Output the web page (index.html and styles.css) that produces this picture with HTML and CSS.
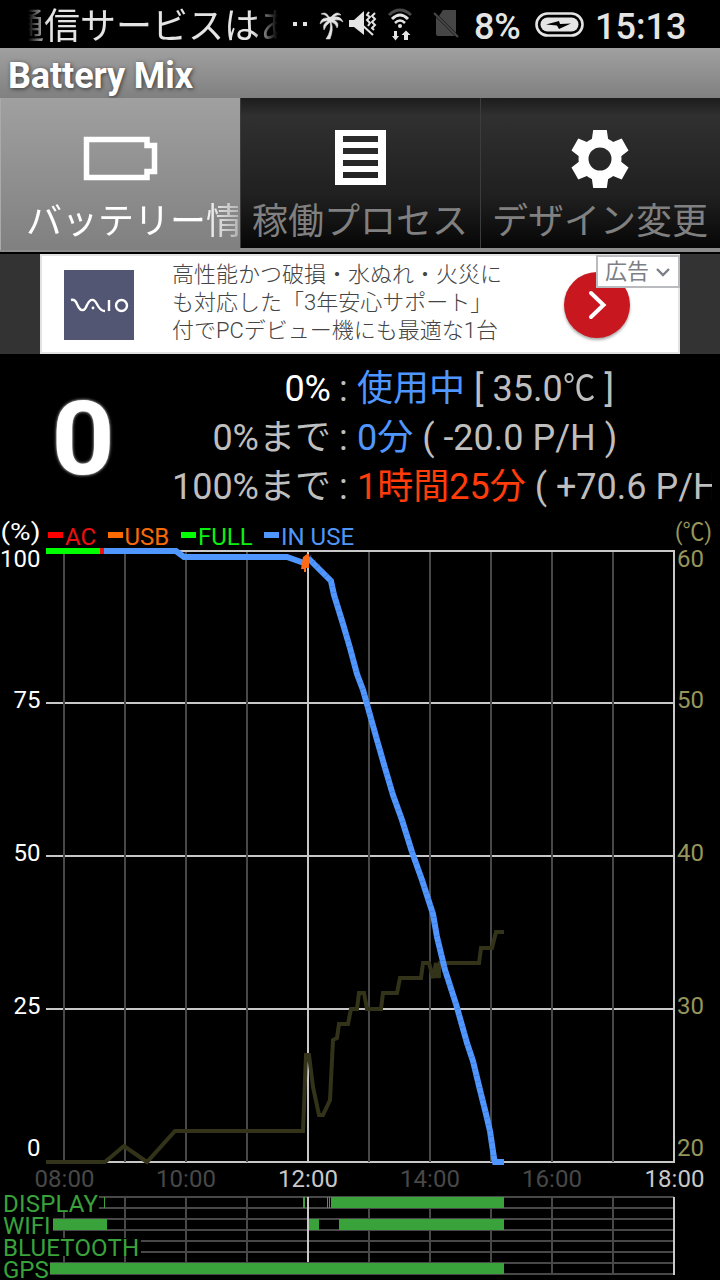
FILE: index.html
```html
<!DOCTYPE html>
<html lang="ja">
<head>
  <meta charset="UTF-8">
  <meta name="viewport" content="width=device-width, initial-scale=1.0">
  <title>Battery Mix</title>
  <link rel="stylesheet" href="styles.css">
</head>
<body>
  <!-- Status bar -->
  <div class="status-bar">
    <div class="ticker"><span>通信サービスはあ</span></div>
    <svg class="status-icons" width="182" height="48" viewBox="288 0 182 48">
      <g fill="#e4e4e4">
        <rect x="293" y="22" width="4" height="4"/>
        <rect x="303" y="22" width="4" height="4"/>
        <!-- palm tree -->
        <path d="M329 17 Q326 11 321 14 Q326 14 328 18 Q321 17 320 24 Q324 20 328 21 Q322 24 324 30 Q326 25 330 22 Q332 30 326 39 L330 39 Q334 29 331 22 Q336 23 337 28 Q340 23 334 20 Q340 19 343 22 Q341 16 334 17 Q337 14 341 15 Q337 10 331 17 Z" stroke="#e4e4e4" stroke-width="0.5"/>
        <!-- muted speaker -->
        <path d="M349 20 H354 L364 11 V35 L354 27 H349 Z"/>
      </g>
      <g fill="none" stroke="#e4e4e4" stroke-width="2">
        <path d="M361 24 L373 35"/>
        <path d="M369 12 L367 15 L370 17 L367 20 L370 23 L368 26"/>
        <path d="M375 13 L372 16 L375 19 L372 22 L375 25 L372 28 L374 30"/>
        <!-- wifi -->
        <path d="M389 15 Q400 5 411 15" stroke="#4a4a4a" stroke-width="3"/>
        <path d="M392 19 Q400 11 408 19" stroke-width="3"/>
        <path d="M395 23 Q400 18 405 23" stroke-width="2.5"/>
      </g>
      <circle cx="400" cy="26" r="2" fill="#e4e4e4"/>
      <path d="M394 31 h3 v5 h2 l-3.500 4.500 l-3.500 -4.500 h2 Z M404 40 h4 v-5 h2.500 l-4.500 -4.500 l-4.500 4.500 h2.500 Z" fill="#e4e4e4"/>
      <!-- no sim -->
      <path d="M443 10 H456 V33 L439 16 Z M436 17 L455 36 H438 Q436 36 436 34 Z" fill="#464646"/>
      <path d="M434 13 L458 37" stroke="#464646" stroke-width="2.200"/>
    </svg>
    <span class="percent">8%</span>
    <svg class="battery-icon" width="50" height="26" viewBox="0 0 50 26">
      <rect x="1.500" y="1.500" width="46" height="22" rx="11" fill="none" stroke="#e4e4e4" stroke-width="2.600"/>
      <rect x="5.500" y="5.500" width="38" height="14" rx="7" fill="#e4e4e4"/>
      <path d="M11 12.500 L24 9 L25 12 L36 11.500 L24 17 L22 13.500 Z" fill="#000"/>
    </svg>
    <span class="clock">15:13</span>
  </div>

  <header class="title-bar">
    <h1>Battery Mix</h1>
  </header>

  <!-- Tabs -->
  <nav class="tabs">
    <div class="tab active">
      <svg width="80" height="60" viewBox="0 0 80 60">
        <path d="M6.500 10.500 H67 V16.500 H74.500 V42.500 H67 V48.500 H6.500 Z" fill="none" stroke="#fff" stroke-width="5.500"/>
      </svg>
      <span>バッテリー情報</span>
    </div>
    <div class="tab">
      <svg width="52" height="60" viewBox="0 0 52 60">
        <path d="M1 1 H52 V56 H1 Z M9 7 V13 H44 V7 Z M9 19 V25 H44 V19 Z M9 31 V37 H44 V31 Z M9 43 V49 H44 V43 Z" fill="#fff" fill-rule="evenodd"/>
      </svg>
      <span>稼働プロセス</span>
    </div>
    <div class="tab">
      <svg width="60" height="60" viewBox="-30 -30 60 60">
        <defs>
          <path id="tooth" d="M-9 -14 L-6.800 -29 H6.800 L9 -14 Z"/>
        </defs>
        <g fill="#fff">
          <use href="#tooth"/>
          <use href="#tooth" transform="rotate(60)"/>
          <use href="#tooth" transform="rotate(120)"/>
          <use href="#tooth" transform="rotate(180)"/>
          <use href="#tooth" transform="rotate(240)"/>
          <use href="#tooth" transform="rotate(300)"/>
        </g>
        <circle r="16.500" fill="none" stroke="#fff" stroke-width="10"/>
      </svg>
      <span>デザイン変更</span>
    </div>
  </nav>

  <!-- Ad -->
  <div class="ad-area">
    <div class="ad">
      <div class="ad-logo">
        <svg width="70" height="70" viewBox="0 0 70 70" fill="none" stroke="#fff" stroke-width="2.400">
          <path d="M7 30 Q11 29 13 34 Q16 41 19 40 Q21 40 23 35 Q26 29 29 30 Q31 30 34 36 Q37 41 41 41"/>
          <path d="M45 30 V41"/>
          <circle cx="57.500" cy="35.500" r="5.500"/>
          <circle cx="29" cy="38" r="1.400" fill="#fff" stroke="none"/>
        </svg>
      </div>
      <p>高性能かつ破損・水ぬれ・火災に<br>も対応した「3年安心サポート」<br>付でPCデビュー機にも最適な1台</p>
      <div class="ad-button">
        <svg width="66" height="66" viewBox="0 0 66 66"><path d="M27 21 L39.500 33 L27 45" fill="none" stroke="#fff" stroke-width="4" stroke-linecap="round"/></svg>
      </div>
      <div class="ad-label">広告<svg width="16" height="10" viewBox="0 0 16 10"><path d="M2 2 L8 8 L14 2" fill="none" stroke="#7c7f86" stroke-width="2.400"/></svg></div>
    </div>
  </div>

  <!-- Current state -->
  <section class="info">
    <div class="level">0</div>
    <div class="rows">
      <div class="row"><span class="key white">0%</span><span class="colon">:</span><span class="value"><b class="blue">使用中</b> [ 35.0<span class="unit">℃</span> ]</span></div>
      <div class="row"><span class="key">0%まで</span><span class="colon">:</span><span class="value"><b class="blue">0分</b> ( -20.0 P/H )</span></div>
      <div class="row"><span class="key">100%まで</span><span class="colon">:</span><span class="value"><b class="red">1時間25分</b> ( +70.6 P/H )</span></div>
    </div>
  </section>

  <!-- History chart -->
  <svg class="chart" width="720" height="766" viewBox="0 514 720 766">
    <!-- legend -->
    <text x="0.500" y="540" class="white" textLength="40" lengthAdjust="spacingAndGlyphs">(%)</text>
    <rect x="48" y="532" width="15" height="6" fill="#f00"/>
    <text x="65" y="545" fill="#e81010">AC</text>
    <rect x="108" y="532" width="15" height="6" fill="#ff6a00"/>
    <text x="124.500" y="545" fill="#f86a0a">USB</text>
    <rect x="181" y="532" width="15" height="6" fill="#0f0"/>
    <text x="198" y="545" fill="#0cf010">FULL</text>
    <rect x="264" y="532" width="15" height="6" fill="#5096ff"/>
    <text x="281" y="545" fill="#5096f8">IN USE</text>
    <text x="675" y="540" class="temp" textLength="37" lengthAdjust="spacingAndGlyphs">(℃)</text>

    <!-- grid -->
    <path class="line" d="M46 551 H675 M46 703 H675 M46 856 H675 M46 1009 H675 M46 1162 H675"/>
    <path class="line dim" d="M64 552 V1162 M125 552 V1162 M186 552 V1162 M247 552 V1162 M369 552 V1162 M430 552 V1162 M491 552 V1162 M552 552 V1162 M613 552 V1162"/>
    <path class="line" d="M308 551 V1162 M674 551 V1162"/>

    <!-- temperature -->
    <polyline class="temp-line" points="46,1162 105,1162 124,1146 147,1162 175,1131 303,1131 306,1055 309,1055 313,1087 319,1115 323,1115 330,1100 333,1040 337,1038 339,1024 348,1024 351,1009 357,1009 359,993 364,993 367,1009 381,1009 383,993 397,993 400,978 421,978 423,963 429,963 433,978 436,963 438,978 440,963 479,963 481,948 492,948 496,932 504,932"/>
    <rect x="434" y="963" width="7" height="15" fill="#33331a"/>

    <!-- battery level -->
    <path d="M46 551 H100" stroke="#0f0" stroke-width="6"/>
    <path d="M100 551 H104" stroke="#f01010" stroke-width="6"/>
    <polyline class="level-line" points="104,551 176,551 184,557 287,557 304,563"/>
    <polyline class="level-line" points="308,558 331,581 334,595 343,624 350,648 357,674 363,690 370,715 377,740 385,768 393,795 402,820 412,852 422,880 433,914 437,937 445,970 456,1004 467,1043 473,1061 480,1090 486,1114 490,1131 494,1158 495,1162 504,1162"/>
    <path class="ticks" d="M309 557 L331 581 L334 595 L343 624 L350 648 L357 674 L363 690 L370 715 L377 740 L385 768 L393 795 L402 820 L412 852 L422 880 L433 914 L437 937 L445 970 L456 1004 L467 1043 L473 1061 L480 1090 L486 1114 L490 1131 L494 1158"/>
    <path d="M303 557 L307 554 H309 V568 H306 V572 H304 V569 H301 Z" fill="#ff6a14"/>

    <!-- axis labels -->
    <g class="white end">
      <text x="40.500" y="567">100</text>
      <text x="40.500" y="708">75</text>
      <text x="40.500" y="861">50</text>
      <text x="40.500" y="1014">25</text>
      <text x="40.500" y="1156">0</text>
    </g>
    <g class="temp">
      <text x="677" y="567">60</text>
      <text x="677" y="708">50</text>
      <text x="677" y="861">40</text>
      <text x="677" y="1014">30</text>
      <text x="677" y="1156">20</text>
    </g>
    <g class="hours">
      <text x="64.500" y="1187">08:00</text>
      <text x="186" y="1187">10:00</text>
      <text x="308" y="1187" class="on">12:00</text>
      <text x="430" y="1187">14:00</text>
      <text x="552" y="1187">16:00</text>
      <text x="674.500" y="1187" class="on">18:00</text>
    </g>

    <!-- usage bars -->
    <path class="line dim" d="M46 1197 H674 M46 1208 H674 M46 1219 H674 M46 1230 H674 M46 1241 H674 M46 1252 H674 M46 1263 H674 M46 1274 H674"/>
    <path class="line dim" d="M64 1197 V1263 M125 1197 V1263 M186 1197 V1263 M247 1197 V1263 M369 1197 V1263 M430 1197 V1263 M491 1197 V1263 M552 1197 V1274 M613 1197 V1274"/>
    <g fill="#000">
      <rect x="0" y="1194" width="99" height="17"/>
      <rect x="0" y="1216" width="53" height="18"/>
      <rect x="0" y="1238" width="141" height="18"/>
      <rect x="0" y="1260" width="50" height="18"/>
    </g>
    <g fill="#3aa23a">
      <rect x="104" y="1197" width="1" height="11"/>
      <rect x="303" y="1197" width="2" height="11"/>
      <rect x="327" y="1197" width="1" height="11"/>
      <rect x="329" y="1197" width="1" height="11"/>
      <rect x="331" y="1197" width="173" height="11"/>
      <rect x="53" y="1219" width="54" height="11"/>
      <rect x="308" y="1219" width="11" height="11"/>
      <rect x="339" y="1219" width="165" height="11"/>
      <rect x="50" y="1263" width="454" height="11"/>
    </g>
    <path class="line" d="M308 1197 V1262 M674 1197 V1275"/>
    <g fill="#3aa23a">
      <text x="3" y="1212" textLength="95">DISPLAY</text>
      <text x="3" y="1234">WIFI</text>
      <text x="3" y="1256" textLength="136">BLUETOOTH</text>
      <text x="3" y="1278">GPS</text>
    </g>
  </svg>
</body>
</html>
```
FILE: styles.css
```css
* {
  margin: 0;
  padding: 0;
  box-sizing: border-box;
}

body {
  width: 720px;
  height: 1280px;
  background-color: #000;
  color: #bebebe;
  font-family: Roboto, "Noto Sans CJK JP", sans-serif;
  overflow: hidden;
}

svg {
  display: block;
  flex-shrink: 0;
}

/* Status bar */
.status-bar {
  height: 48px;
  display: flex;
  align-items: center;
  color: #e4e4e4;
}

.ticker {
  width: 250px;
  margin-left: 28px;
  height: 48px;
  overflow: hidden;
  white-space: nowrap;
  font-size: 36px;
  line-height: 54px;
  -webkit-mask-image: linear-gradient(to right, transparent, #000 20px, #000 225px, transparent);
  mask-image: linear-gradient(to right, transparent, #000 20px, #000 225px, transparent);
}

.ticker span {
  display: block;
  margin-left: -20px;
}

.status-icons {
  margin-left: 10px;
}

.percent,
.clock {
  font-size: 36px;
  font-weight: 500;
  line-height: 54px;
  padding-top: 5px;
}

.percent {
  width: 65px;
  padding-left: 4px;
  letter-spacing: -0.3px;
}

.battery-icon {
  margin-top: 2px;
}

.clock {
  margin-left: 10px;
}

/* Title */
.title-bar {
  height: 50px;
  padding-left: 8px;
  background: linear-gradient(#a0a0a0, #808080);
}

.title-bar h1 {
  font-size: 36px;
  line-height: 56px;
  letter-spacing: -0.1px;
  color: #fff;
  text-shadow: 1px 1px 4px rgba(0, 0, 0, 0.6);
}

/* Tabs */
.tabs {
  display: flex;
  height: 156px;
  border-bottom: 2px solid #000;
  background-color: #8c8c8c;
}

.tab {
  width: 240px;
  height: 150px;
  padding-top: 31px;
  display: flex;
  flex-direction: column;
  align-items: center;
  overflow: hidden;
  background: linear-gradient(#1c1c1c, #303030 12%, #202020 65%, #060606);
  box-shadow: inset 1px 0 #3c3c3c;
  color: #808080;
}

.tab svg {
  margin-right: 1px;
}

.tab span {
  font-size: 36px;
  line-height: 67px;
  white-space: nowrap;
}

.tab.active {
  height: 152px;
  align-items: flex-start;
  background: linear-gradient(#a0a0a0, #808080);
  box-shadow: inset 1px 0 #aaa;
  color: #fff;
}

.tab.active svg {
  margin-left: 80px;
}

.tab.active span {
  width: 212px;
  margin-left: 26px;
  overflow: hidden;
  -webkit-mask-image: linear-gradient(to right, #000 175px, rgba(0, 0, 0, 0.4));
  mask-image: linear-gradient(to right, #000 175px, rgba(0, 0, 0, 0.4));
}

/* Ad */
.ad-area {
  height: 100px;
  padding: 0 40px;
  background-color: #333;
}

.ad {
  position: relative;
  height: 100px;
  display: flex;
  background-color: #fff;
  border: 2px solid #e2e2e2;
}

.ad-logo {
  width: 70px;
  height: 70px;
  margin: 14px 38px 0 22px;
  background-color: #535673;
}

.ad p {
  width: 392px;
  padding-top: 5px;
  font-size: 22px;
  line-height: 28px;
  font-weight: 300;
  color: #444;
  white-space: nowrap;
}

.ad-button {
  width: 66px;
  height: 66px;
  margin-top: 16px;
  border-radius: 50%;
  background-color: #c8171e;
  box-shadow: 0 2px 3px rgba(0, 0, 0, 0.35);
}

.ad-label {
  position: absolute;
  top: -1px;
  right: -2px;
  width: 84px;
  height: 33px;
  display: flex;
  align-items: center;
  gap: 6px;
  padding-left: 7px;
  background-color: #fff;
  border: 2px solid #b9bbbe;
  font-size: 22px;
  line-height: 26px;
  color: #7c7f86;
}

/* Info */
.info {
  height: 160px;
  display: flex;
}

.level {
  width: 166px;
  flex-shrink: 0;
  text-align: center;
  font-size: 102px;
  font-weight: 700;
  line-height: 171px;
  color: #fff;
  text-shadow: 0 0 3px #fff;
  transform: scaleX(1.08);
}

.rows {
  width: 546px;
  padding-top: 11px;
  overflow: hidden;
}

.row {
  display: flex;
  height: 49px;
  font-size: 36px;
  line-height: 49px;
  white-space: nowrap;
}

.key {
  width: 165px;
  flex-shrink: 0;
  display: flex;
  justify-content: flex-end;
}

.colon {
  width: 26px;
  flex-shrink: 0;
  padding-left: 8px;
}

.row b {
  font-weight: 400;
}

.unit {
  display: inline-block;
  width: 33px;
  transform: scaleX(0.9);
  transform-origin: left;
}

.white {
  color: #fff;
  fill: #fff;
}

.blue {
  color: #5096ff;
}

.red {
  color: #ff3c0a;
}

/* Chart */
.chart {
  font-size: 24px;
}

.line {
  fill: none;
  stroke: #c8c8c8;
  stroke-width: 2;
}

.line.dim {
  stroke: #484848;
}

.temp {
  fill: #96965a;
}

.end {
  text-anchor: end;
}

.hours {
  fill: #484848;
  text-anchor: middle;
}

.hours .on {
  fill: #c8c8c8;
}

.temp-line {
  fill: none;
  stroke: #33331a;
  stroke-width: 4;
}

.level-line {
  fill: none;
  stroke: #5096ff;
  stroke-width: 6;
}

.ticks {
  fill: none;
  stroke: #3a72c8;
  stroke-width: 6;
  stroke-dasharray: 0.5 5.8;
}
```
